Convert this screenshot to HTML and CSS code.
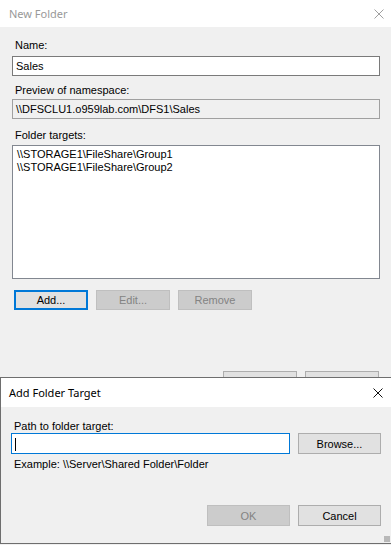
FILE: index.html
```html
<!DOCTYPE html>
<html lang="en">
<head>
    <meta charset="UTF-8">
    <title>New Folder</title>
    <link rel="stylesheet" href="styles.css">
</head>
<body>
    <section class="dialog">
        <div class="titlebar inactive">
            <span class="title">New Folder</span>
            <svg class="close" width="10" height="10" viewBox="0 0 10 10"><path d="M0.5 0.5L9.5 9.5M9.5 0.5L0.5 9.5" stroke="#a0a0a0" stroke-width="1"/></svg>
        </div>
        <div class="content">
            <label class="lbl first">Name:</label>
            <div class="field">Sales</div>
            <label class="lbl preview">Preview of namespace:</label>
            <div class="field readonly">\\DFSCLU1.o959lab.com\DFS1\Sales</div>
            <label class="lbl targets">Folder targets:</label>
            <div class="list">
                <div>\\STORAGE1\FileShare\Group1</div>
                <div>\\STORAGE1\FileShare\Group2</div>
            </div>
            <div class="row">
                <button class="btn focus">Add...</button>
                <button class="btn" disabled>Edit...</button>
                <button class="btn" disabled>Remove</button>
            </div>
            <div class="row end bottom">
                <button class="btn">OK</button>
                <button class="btn">Cancel</button>
            </div>
        </div>
    </section>

    <section class="dialog modal">
        <div class="titlebar">
            <span class="title">Add Folder Target</span>
            <svg class="close" width="10" height="10" viewBox="0 0 10 10"><path d="M0.5 0.5L9.5 9.5M9.5 0.5L0.5 9.5" stroke="#111" stroke-width="1"/></svg>
        </div>
        <div class="content">
            <label class="lbl first">Path to folder target:</label>
            <div class="row path">
                <div class="field active"><span class="caret"></span></div>
                <button class="btn wide">Browse...</button>
            </div>
            <div class="hint">Example: \\Server\Shared Folder\Folder</div>
            <div class="row end actions">
                <button class="btn wide" disabled>OK</button>
                <button class="btn wide">Cancel</button>
            </div>
        </div>
        <div class="grip"></div>
    </section>
</body>
</html>
```
FILE: styles.css
```css
body{
    margin:0;
    width:391px;
    height:545px;
    overflow:hidden;
    background:#f0f0f0;
    font-family:"Liberation Sans", Arial, sans-serif;
    font-size:11px;
    color:#000;
    position:relative;
}
.titlebar{
    height:27px;
    background:#fff;
    display:flex;
    align-items:center;
    justify-content:space-between;
    padding:0 9px 0 9px;
}
.title{
    font-family:"Noto Sans", "Open Sans", sans-serif;
    font-size:11px;
}
.inactive .title{
    color:#999;
}
.inactive .close{
    margin-right:-2px;
}
.content{
    padding:0 11px 0 12px;
}
.lbl{
    display:block;
    line-height:13px;
    padding-left:3px;
    margin:9px 0 2px;
}
.lbl.first{
    margin-top:12px;
    margin-bottom:4px;
}
.lbl.preview{
    margin-top:8px;
}
.lbl.targets{
    margin-top:10px;
    margin-bottom:3px;
}
.field{
    height:20px;
    box-sizing:border-box;
    border:1px solid #7a7a7a;
    background:#fff;
    padding:0 3px;
    line-height:18px;
}
.field.readonly{
    background:#f0f0f0;
    border-color:#a0a0a0;
}
.list{
    height:134px;
    box-sizing:border-box;
    border:1px solid #828790;
    background:#fff;
    padding:2px 4px;
    line-height:13px;
}
.row{
    display:flex;
    gap:8px;
}
.row.end{
    justify-content:flex-end;
}
.content > .row{
    margin-top:11px;
    padding-left:2px;
}
.content > .row.bottom{
    margin-top:61px;
    padding-right:1px;
}
.btn{
    width:74px;
    height:20px;
    box-sizing:border-box;
    border:1px solid #adadad;
    background:#e1e1e1;
    font:inherit;
    color:#000;
    padding:0;
}
.btn.focus{
    border:2px solid #0078d7;
}
.btn:disabled{
    background:#cccccc;
    border-color:#bfbfbf;
    color:#838383;
}
.modal{
    position:absolute;
    left:0;
    top:377px;
    width:391px;
    height:165px;
    background:#f0f0f0;
    border-top:1px solid #6e6e6e;
    border-left:1px solid #6e6e6e;
    border-bottom:1px solid #6e6e6e;
}
.modal .titlebar{
    height:29px;
    padding:0 9px 0 8px;
}
.modal .title{
    color:#000;
}
.modal .content{
    padding:0 0 0 10px;
    width:370px;
}
.modal .lbl.first{
    margin-top:13px;
    margin-bottom:0;
}
.modal .row.path{
    margin-top:0;
    padding-left:0;
}
.path .field{
    flex:1;
    height:21px;
    border-color:#0078d7;
}
.caret{
    display:inline-block;
    width:1px;
    height:13px;
    background:#000;
    vertical-align:middle;
}
.btn.wide{
    width:83px;
    height:21px;
}
.hint{
    margin-top:4px;
    padding-left:3px;
    line-height:13px;
}
.modal .row.actions{
    margin-top:34px;
    padding-left:0;
}
.grip{
    position:absolute;
    right:2px;
    bottom:1px;
    width:6px;
    height:6px;
    background:radial-gradient(circle, #b8b8b8 0.8px, transparent 1px) 0 0/2px 2px;
}
```
